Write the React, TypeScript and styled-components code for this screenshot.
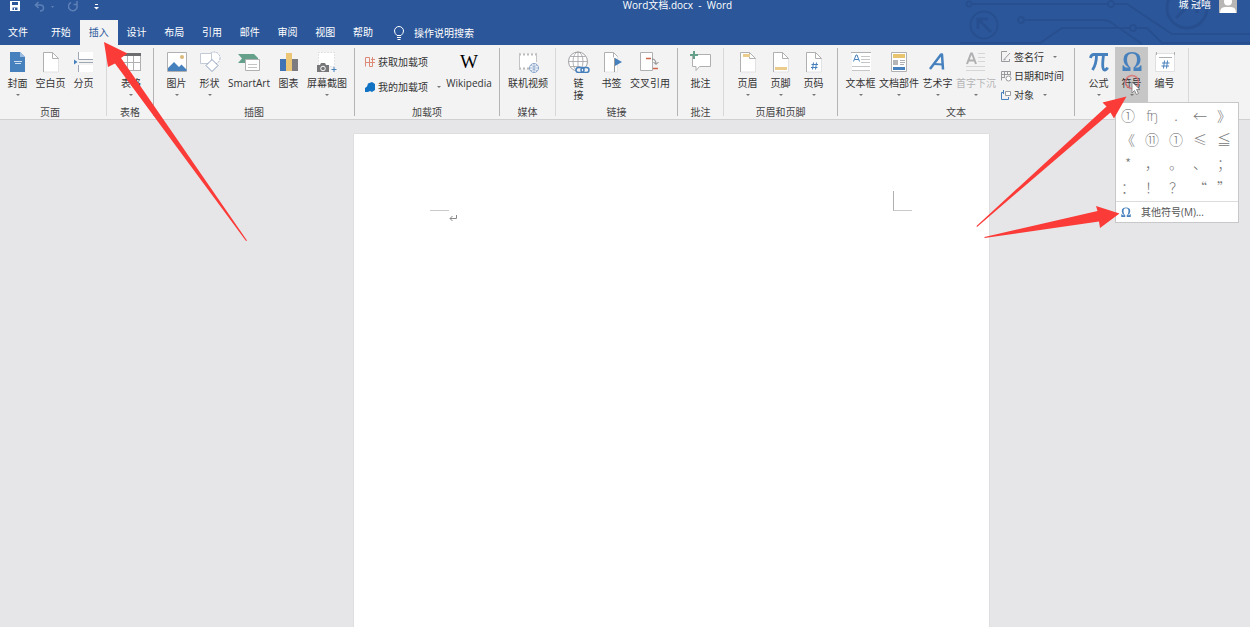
import React from "react";
import styled, { createGlobalStyle, css } from "styled-components";

const GlobalStyle = createGlobalStyle`
  *, *::before, *::after { box-sizing: border-box; }
  html, body { margin: 0; padding: 0; }
  body {
    font-family: "Open Sans", "Noto Sans CJK SC", sans-serif;
    font-size: 10px;
    line-height: 14px;
    color: #333;
    background: #e6e6e8;
    overflow: hidden;
  }
  button {
    font: inherit;
    color: inherit;
    border: 0;
    padding: 0;
    background: none;
    white-space: nowrap;
  }
`;

const BLUE = "#4680bd";
const LINE = "#b0b0b3";

const Shell = styled.div`
  position: relative;
  display: flex;
  flex-direction: column;
  min-height: 100vh;
  overflow: hidden;
`;

const Header = styled.header`
  position: relative;
  background: #2b579a;
  color: #fff;
`;

const Circuit = styled.svg`
  position: absolute;
  top: 0;
  right: 0;
`;

const TitleBar = styled.div`
  position: relative;
  display: grid;
  grid-template-columns: 1fr auto 1fr;
  height: 20px;
  padding: 0 13px 0 10px;
`;

const QuickAccess = styled.div`
  display: flex;
  align-items: center;
  gap: 14px;
  height: 12px;
`;

const QuickButton = styled.button<{ $faint?: boolean }>`
  display: flex;
  align-items: center;
  color: ${(p) => (p.$faint ? "#5d80b8" : "#fff")};
`;

const Title = styled.div`
  height: 12px;
  line-height: 11px;
  padding-left: 108px;
  white-space: pre;
`;

const User = styled.div`
  display: flex;
  justify-content: flex-end;
  gap: 8px;
  height: 12px;
  line-height: 8px;
`;

const TabRow = styled.nav`
  position: relative;
  display: flex;
  height: 25px;
`;

const Tabs = styled.div`
  display: grid;
  grid-template-columns: repeat(9, 1fr);
  width: 340px;
`;

const Tab = styled.button<{ $active?: boolean }>`
  height: 25px;
  padding-bottom: 1px;
  ${(p) =>
    p.$active &&
    css`
      background: #f3f3f4;
      color: #2b579a;
    `}
`;

const FileTab = styled(Tab)`
  width: 36px;
  margin-right: 6px;
`;

const TellMe = styled.button`
  display: flex;
  align-items: center;
  gap: 9px;
  margin-left: 11px;
`;

const Ribbon = styled.div`
  display: flex;
  height: 75px;
  background: #f3f3f4;
  border-bottom: 1px solid #d0d0d2;
`;

const Separator = styled.div<{ $strong?: boolean }>`
  width: 1px;
  flex: none;
  margin: 3px 0;
  background: ${(p) => (p.$strong ? "#b4b4b6" : "#d8d8da")};
`;

const GroupBox = styled.section<{ $width: number }>`
  display: flex;
  flex-direction: column;
  flex: none;
  width: ${(p) => p.$width}px;
`;

const GroupItems = styled.div<{ $pad: number }>`
  display: flex;
  height: 60px;
  padding: 2px 0 0 ${(p) => p.$pad}px;
`;

const GroupLabel = styled.div`
  text-align: center;
  color: #444;
`;

const Big = styled.button<{ $width: number; $active?: boolean; $disabled?: boolean }>`
  display: flex;
  flex-direction: column;
  align-items: center;
  width: ${(p) => p.$width}px;
  height: 56px;
  padding-top: 4px;
  background: ${(p) => (p.$active ? "#c6c6c7" : "none")};
  color: ${(p) => (p.$disabled ? "#b3b3b5" : "inherit")};
`;

const BigLabel = styled.span`
  margin-top: 4px;
  line-height: 12px;
  white-space: pre;
`;

const Caret = styled.i`
  width: 0;
  height: 0;
  border: 2px solid transparent;
  border-top-color: #777;
  border-bottom: 0;
`;

const BigCaret = styled(Caret)`
  margin-top: 5px;
`;

const SmallColumn = styled.div<{ $width: number; $row: number; $top: number }>`
  display: grid;
  grid-auto-rows: ${(p) => p.$row}px;
  align-content: start;
  width: ${(p) => p.$width}px;
  padding-top: ${(p) => p.$top}px;
`;

const TextTools = styled(SmallColumn)`
  padding-left: 2px;
`;

const Small = styled.button`
  display: flex;
  align-items: center;
  gap: 2px;
`;

const SmallCaret = styled(Caret)`
  margin-left: 7px;
`;

const WikiMark = styled.span`
  height: 22px;
  font: 19px/22px "Liberation Serif", serif;
  color: #000;
`;

const MenuAnchor = styled.div`
  position: relative;
`;

const Menu = styled.div`
  position: absolute;
  top: 55px;
  left: 0;
  z-index: 2;
  width: 124px;
  background: #fff;
  border: 1px solid #c8c8ca;
`;

const SymbolGrid = styled.div`
  display: grid;
  grid-template-columns: repeat(5, 24px);
  grid-auto-rows: 24px;
  padding-bottom: 2px;
`;

const SymbolButton = styled.button`
  font: 14px/22px "Noto Sans CJK SC", "DejaVu Sans", sans-serif;
  font-weight: 300;
  color: #777;
`;

const MoreSymbols = styled.button`
  display: flex;
  align-items: center;
  gap: 9px;
  width: 100%;
  height: 21px;
  padding-left: 4px;
  border-top: 1px solid #dcdcde;
  color: #555;
`;

const ClickMark = styled.svg`
  position: absolute;
  top: 26px;
  left: 8px;
  z-index: 1;
  pointer-events: none;
`;

const Workspace = styled.main`
  display: flex;
  flex: 1;
  justify-content: center;
  padding: 14px 0 0 93px;
`;

const Page = styled.article`
  width: 635px;
  padding: 57px 77px 0 76px;
  background: #fff;
  box-shadow: 0 0 1px #b5b5b8;
`;

const MarginMarks = styled.div`
  display: flex;
  justify-content: space-between;
  height: 20px;
`;

const Mark = styled.div<{ $side?: boolean }>`
  width: 19px;
  border-bottom: 1px solid #c9c9c9;
  border-left: ${(p) => (p.$side ? "1px solid #b0b0b0" : "0")};
`;

const Paragraph = styled.div`
  display: flex;
  padding: 3px 0 0 19px;
`;

const Pointers = styled.svg`
  position: absolute;
  top: 0;
  left: 0;
  z-index: 3;
  pointer-events: none;
`;

const Ico = ({ children }: { children: React.ReactNode }) => (
  <svg width="24" height="22" viewBox="0 0 24 22" fill="none" stroke={LINE} strokeWidth="1" aria-hidden="true">
    {children}
  </svg>
);

const Sheet = ({ x = 5 }: { x?: number }) => (
  <g>
    <path d={`M${x}.5 1.5h9l6 6v13.5h-15z`} fill="#fff" stroke="#e2e2e4" />
    <path d={`M${x}.5 21V1.5h9l6 6`} />
    <path d={`M${x + 9}.5 1.500v6h6`} />
  </g>
);

const OMEGA =
  "M2.500 20v-5.500h1.500q.5 2 2 2h3q-5.500-2.500-5.500-8Q3.500 1 12 1t8.500 7.500q0 5.500-5.500 8h3q1.500 0 2-2h1.500V20h-8v-3.500q3.500-3 3.500-8Q17 2.500 12 2.500T7 8.500q0 5 3.500 8V20z";

const icons: Record<string, React.ReactNode> = {
  cover: (
    <Ico>
      <path d="M4 1h10l5 5v15H4z" fill={BLUE} stroke="none" />
      <path d="M14 1v5h5z" fill="#9dbde0" stroke="none" />
      <path d="M8 10.500h8M9 12.500h6" stroke="#cfe0f2" />
    </Ico>
  ),
  blank: <Ico><Sheet x={4} /></Ico>,
  pageBreak: (
    <Ico>
      <path d="M6 1h15v8H6zM6 14h15v7H6z" fill="#fff" stroke="none" />
      <path d="M6.500 1v7.500H21M6.500 21v-7M7 11.500h14" stroke="#a0a7b4" />
      <path d="M2 8.500 5.500 11 2 13.500z" fill={BLUE} stroke="none" />
    </Ico>
  ),
  table: (
    <Ico>
      <path d="M2 2h20v18H2z" fill="#fff" stroke="none" />
      <path d="M2 2h20v3H2z" fill="#6d6d70" stroke="none" />
      <path d="M2 11.500h20M2 19.500h20M8.500 5v15M14.500 5v15M21.500 5v15" />
    </Ico>
  ),
  picture: (
    <Ico>
      <path d="M2.500 1.500h19v19h-19z" fill="#fff" />
      <circle cx="17" cy="6" r="2" fill="#dcb878" stroke="none" />
      <path d="M3 20v-3l6-6 5 5 2.500-2.500 5 5v1.500z" fill={BLUE} stroke="none" />
    </Ico>
  ),
  shapes: (
    <Ico>
      <circle cx="16" cy="7" r="6" fill="#fff" stroke="#a9b5c8" strokeDasharray="2 1" />
      <path d="M2.500 2.500h11v10h-11z" fill="#fff" stroke="#c3cad5" />
      <path d="m14 8.500 6 6-6 6-6-6z" fill="#fff" stroke="#8c9dba" />
    </Ico>
  ),
  smartArt: (
    <Ico>
      <path d="M1 3h16l4 4v5H1l4-4.500z" fill="#64a08a" stroke="none" />
      <path d="M8.500 8.500h14v11h-14z" fill="#fff" />
      <path d="M11 13.500h9M11 16.500h9" stroke="#c4c4c7" />
    </Ico>
  ),
  chart: (
    <Ico>
      <path d="M3 8h6v12H3z" fill="#3f73b5" stroke="none" />
      <path d="M9 2h6v18H9z" fill="#ebc676" stroke="none" />
      <path d="M15 8h6v12h-6z" fill="#7b7b80" stroke="none" />
    </Ico>
  ),
  screenshot: (
    <Ico>
      <path d="M3.500 1.500h16v14h-16z" fill="#fff" stroke="#ccc" strokeDasharray="1 2" />
      <path d="M2 14h3l1-2h4l1 2h3v7H2z" fill="#77777a" stroke="none" />
      <circle cx="8" cy="17.500" r="2.300" fill="#77777a" stroke="#fff" />
      <path d="M16.500 18.500h5M19 16v5" stroke={BLUE} />
    </Ico>
  ),
  video: (
    <Ico>
      <path d="M3 3h17v15H3z" fill="#fff" stroke="none" />
      <path d="M3.500 3.500h17M3.500 17.500h11" stroke="#777" strokeWidth="2" strokeDasharray="1 3" />
      <path d="M3.500 2v17M20.500 2v9" stroke="#c4c4c6" />
      <circle cx="18" cy="17" r="4.500" fill="#fff" stroke="#86a3ca" />
      <path d="M13.500 17h9M18 12.500v9M15 14.500q3 2 6 0M15 19.500q3-2 6 0" stroke="#86a3ca" strokeWidth=".8" />
    </Ico>
  ),
  link: (
    <Ico>
      <circle cx="11" cy="10.500" r="9.500" fill="#fff" stroke="#a0a0a4" />
      <ellipse cx="11" cy="10.500" rx="5" ry="9.500" stroke="#a0a0a4" strokeWidth=".8" />
      <path d="M1.500 10.500h19M11 1v19M3.500 5.500h15M3.500 15.500h10" stroke="#a0a0a4" strokeWidth=".8" />
      <rect x="9" y="16.500" width="8" height="5" rx="2.500" fill="#f3f3f4" stroke={BLUE} strokeWidth="1.500" />
      <rect x="14" y="16.500" width="8" height="5" rx="2.500" stroke={BLUE} strokeWidth="1.500" />
    </Ico>
  ),
  bookmark: (
    <Ico>
      <path d="M4.500 1.500h9l4 4v15.500h-13z" fill="#fff" stroke="#e6e6e8" />
      <path d="M4.500 21V1.500h9l4 4M13.500 1.500v5" />
      <path d="M14.500 7v14" stroke="#999" />
      <path d="m15 7 7 4-7 4z" fill={BLUE} stroke="none" />
    </Ico>
  ),
  crossRef: (
    <Ico>
      <path d="M2.500 1.500h12v18h-12z" fill="#fff" />
      <path d="M8 7.500h5M15 17.500h5" stroke="#d0664b" strokeWidth="1.500" />
      <path d="M14 8q4 0 4 5m-2.500-2 2.500 2.500 2.500-2.500" stroke="#808084" />
    </Ico>
  ),
  comment: (
    <Ico>
      <path d="M3.500 3.500h18v12h-11l-3.500 4v-4H3.500z" fill="#fff" />
      <path d="M5 0v8M1 4h8" stroke="#64a08a" strokeWidth="2" />
    </Ico>
  ),
  header: <Ico><Sheet x={4} /><path d="M7 3h7v3H7z" fill="#eccc8c" stroke="none" /></Ico>,
  footer: <Ico><Sheet x={4} /><path d="M6 16h12v3H6z" fill="#eccc8c" stroke="none" /></Ico>,
  pageNo: (
    <Ico>
      <Sheet x={4} />
      <path d="m11.500 11.500-1 7M14.500 11.500l-1 7M9.500 13.500h6.500M9 16.500h6.500" stroke={BLUE} />
    </Ico>
  ),
  textBox: (
    <Ico>
      <path d="M3 1h19v19H3z" fill="#fff" stroke="none" />
      <path d="M2 1.500h20" />
      <path d="M12 5.500h9M12 8.500h9M12 11.500h9M3 15.500h18M3 19.500h18" stroke="#c6c6c9" />
      <path d="M4.500 10.500 7 4h1l2.500 6.500M5.500 8.500h4" stroke={BLUE} />
    </Ico>
  ),
  parts: (
    <Ico>
      <path d="M4.500 1.500h15v19h-15z" fill="#fff" />
      <path d="M6 3h12v4H6z" fill="#e9c46e" stroke="none" />
      <path d="M6 9h5v5H6z" fill="#b5b5b8" stroke="none" />
      <path d="M13 9.500h5M13 11.500h5M13 13.500h4" />
      <path d="M6 16h12v3H6z" fill={BLUE} stroke="none" />
    </Ico>
  ),
  wordArt: (
    <Ico>
      <path d="M4 18 15 3.500h1l1 15" stroke={BLUE} strokeWidth="2.500" strokeLinejoin="round" />
      <path d="m8 13 9 .5" stroke={BLUE} strokeWidth="2" />
    </Ico>
  ),
  dropCap: (
    <Ico>
      <path d="m3 13 4-10.500h1L12 13M4.500 9.500h6" stroke="#b0b0b2" strokeWidth="2" />
      <path d="M14 2.500h7M14 6.500h7M14 10.500h7M2 15.500h19M2 19.500h19" stroke="#d6d6d9" />
    </Ico>
  ),
  formula: (
    <Ico>
      <path d="M3.500 7Q4 3.500 7 3.500h14M9.500 4q0 9-4 15M16.500 4q-2 15 1 15 2 0 3-2.500" stroke={BLUE} strokeWidth="2.800" />
    </Ico>
  ),
  omega: <Ico><path d={OMEGA} fill={BLUE} stroke="none" /></Ico>,
  number: (
    <Ico>
      <path d="M2.500 2.500h19v18h-19z" fill="#fff" stroke="#e0e0e2" />
      <path d="M3.500 1v3M21.500 1v3M6 6.500h13" />
      <path d="m11.500 9.500-1 8M14.500 9.500l-1 8M9 12h7.500M8.500 15h7.500" stroke={BLUE} />
    </Ico>
  ),
};

const Mini = ({ children }: { children: React.ReactNode }) => (
  <svg width="12" height="12" viewBox="0 0 12 12" fill="none" stroke="#999a9e" aria-hidden="true">
    {children}
  </svg>
);

type ItemProps = {
  icon?: string;
  label: string;
  width?: number;
  caret?: boolean;
  active?: boolean;
  disabled?: boolean;
};

const Item = ({ icon, label, width = 33, caret, active, disabled }: ItemProps) => (
  <Big $width={width} $active={active} $disabled={disabled} disabled={disabled}>
    {icon ? icons[icon] : <WikiMark>W</WikiMark>}
    <BigLabel>{label}</BigLabel>
    {caret && <BigCaret />}
  </Big>
);

type GroupProps = { width: number; pad?: number; label?: string; strong?: boolean; children: React.ReactNode };

const Group = ({ width, pad = 6, label, strong, children }: GroupProps) => (
  <>
    <GroupBox $width={width}>
      <GroupItems $pad={pad}>{children}</GroupItems>
      {label && <GroupLabel>{label}</GroupLabel>}
    </GroupBox>
    <Separator $strong={strong} />
  </>
);

const tabs = ["开始", "插入", "设计", "布局", "引用", "邮件", "审阅", "视图", "帮助"];
const symbols = [
  "①", "ʩ", ".", "←", "》",
  "《", "⑪", "①", "≤", "≦",
  "*", "，", "。", "、", "；",
  "：", "！", "？", "“", "”",
];

export default function App() {
  return (
    <Shell>
      <GlobalStyle />
      <Header>
        <Circuit width="290" height="45" viewBox="0 0 290 45" fill="none" stroke="#274f8f" strokeWidth="2" aria-hidden="true">
          <circle cx="9" cy="4" r="2.500" />
          <path d="M12 4h136M154 4h13l45 30h78" />
          <circle cx="151" cy="4" r="3" />
          <circle cx="24" cy="25" r="13.500" />
          <path d="m31 32-12-12M18 29V19h10" strokeWidth="3" />
          <circle cx="61" cy="20" r="3" />
          <path d="M64 20h78q6 0 10 3l30 21M0 43h80l22-15h68M176 28h11l15 15h88" />
          <circle cx="173" cy="28" r="3" />
          <circle cx="227" cy="8" r="20" strokeWidth="3" />
          <path d="m216 18 20-20M223-1h14v14" strokeWidth="3" />
        </Circuit>
        <TitleBar>
          <QuickAccess>
            <QuickButton aria-label="保存">
              <svg width="10" height="10" viewBox="0 0 10 10">
                <path d="M0 0h10v10H0z" fill="currentColor" />
                <path d="M2 1h6v3H2zM2.500 6.500h5V9h-5z" fill="#2b579a" />
                <path d="M4 7h1v2H4z" fill="currentColor" />
              </svg>
            </QuickButton>
            <QuickButton $faint aria-label="撤消">
              <svg width="20" height="11" viewBox="0 0 20 11" fill="none" stroke="currentColor" strokeWidth="1.500">
                <path d="M4.500 1 1.500 4l3 3M2 4h4q3.500 0 3.500 3T6 10" />
                <path d="M17 5h3l-1.500 2z" fill="currentColor" stroke="none" />
              </svg>
            </QuickButton>
            <QuickButton $faint aria-label="恢复">
              <svg width="16" height="11" viewBox="5 0 16 11" fill="none" stroke="currentColor" strokeWidth="1.500">
                <path d="M8 1.500a4.300 4.300 0 1 0 5 1M10.500 3.500H14V0" />
              </svg>
            </QuickButton>
            <QuickButton aria-label="自定义快速访问工具栏">
              <svg width="5" height="6" viewBox="4 0 5 6" overflow="visible">
                <path d="M1 1h3v1H1zM0 4h5L2.500 6.500z" fill="currentColor" />
              </svg>
            </QuickButton>
          </QuickAccess>
          <Title>{"Word文档.docx  -  Word"}</Title>
          <User>
            <span>城 冠嘻</span>
            <svg width="18" height="13" viewBox="0 0 18 13" aria-hidden="true">
              <path d="M0 0h18v13H0z" fill="#b9b6b6" />
              <circle cx="9" cy="1.500" r="4" fill="#fff" />
              <path d="M1 13q0-6 5-6h6q5 0 5 6z" fill="#fff" />
            </svg>
          </User>
        </TitleBar>
        <TabRow>
          <FileTab>文件</FileTab>
          <Tabs>
            {tabs.map((t) => (
              <Tab key={t} $active={t === "插入"}>{t}</Tab>
            ))}
          </Tabs>
          <TellMe>
            <svg width="12" height="14" viewBox="0 0 12 14" fill="none" stroke="#fff" aria-hidden="true">
              <path d="M4 9.500Q1.500 7.500 1.500 5a4.500 4.500 0 0 1 9 0q0 2.500-2.500 4.500zM4 11.500h4M4.500 13.500h3" />
            </svg>
            操作说明搜索
          </TellMe>
        </TabRow>
      </Header>

      <Ribbon>
        <GroupBox $width={100}>
          <GroupItems $pad={1}>
            <Item icon="cover" label="封面" caret />
            <Item icon="blank" label="空白页" />
            <Item icon="pageBreak" label="分页" />
          </GroupItems>
          <GroupLabel>页面</GroupLabel>
        </GroupBox>
        <GroupBox $width={6} />
        <Separator />
        <Group width={46} label="表格" strong>
          <Item icon="table" label="表格" width={36} caret />
        </Group>
        <Group width={200} label="插图" strong>
          <Item icon="picture" label="图片" caret />
          <Item icon="shapes" label="形状" caret />
          <Item icon="smartArt" label="SmartArt" width={46} />
          <Item icon="chart" label="图表" />
          <Item icon="screenshot" label="屏幕截图" width={44} caret />
        </Group>
        <Group width={144} pad={9} label="加载项" strong>
          <SmallColumn $width={80} $row={25} $top={2}>
            <Small>
              <Mini>
                <path d="M1.500 1.500h4v9M1.500 1.500v9M1 6.500h10M8.500 1v5.500M7 3.500h4M5.500 10.500h3v-4" stroke="#dc8a76" />
              </Mini>
              获取加载项
            </Small>
            <Small>
              <Mini>
                <path d="M4 2.500 8 1l3 2v6l-3 2-2-1-2 1H1V7l2-1.500z" fill="#1272c4" stroke="none" />
              </Mini>
              我的加载项
              <SmallCaret />
            </Small>
          </SmallColumn>
          <Item label="Wikipedia" width={50} />
        </Group>
        <Group width={55} label="媒体">
          <Item icon="video" label="联机视频" width={44} />
        </Group>
        <Group width={121} label="链接" strong>
          <Item icon="link" label={"链\n接"} />
          <Item icon="bookmark" label="书签" />
          <Item icon="crossRef" label="交叉引用" width={44} />
        </Group>
        <Group width={45} label="批注">
          <Item icon="comment" label="批注" />
        </Group>
        <Group width={113} pad={7} label="页眉和页脚" strong>
          <Item icon="header" label="页眉" caret />
          <Item icon="footer" label="页脚" caret />
          <Item icon="pageNo" label="页码" caret />
        </Group>
        <Group width={236} label="文本" strong>
          <Item icon="textBox" label="文本框" caret />
          <Item icon="parts" label="文档部件" width={44} caret />
          <Item icon="wordArt" label="艺术字" caret />
          <Item icon="dropCap" label="首字下沉" width={44} caret disabled />
          <TextTools $width={72} $row={19} $top={0}>
            <Small>
              <Mini>
                <path d="M7 .500H1.500v10h8V8M4 8.500l6-6.500M3.500 9l2-.500" />
              </Mini>
              签名行
              <SmallCaret />
            </Small>
            <Small>
              <Mini>
                <path d="M1.500 10.500v-9h9v4M1 4.500h9M4.500 2v6M7.500 2v3M1 7.500h4" />
                <circle cx="8.500" cy="8.500" r="2.500" fill="#fff" />
              </Mini>
              日期和时间
            </Small>
            <Small>
              <Mini>
                <path d="M4 3.500H1.500v7h7V8M3.500 1v4" stroke={BLUE} />
                <path d="M5.500 2.500h5v4h-5z" fill="#fff" />
              </Mini>
              对象
              <SmallCaret />
            </Small>
          </TextTools>
        </Group>
        <Group width={113} pad={7}>
          <Item icon="formula" label="公式" caret />
          <MenuAnchor>
            <Item icon="omega" label="符号" active caret />
            <ClickMark width="22" height="26" viewBox="0 0 22 26" aria-hidden="true">
              <circle cx="9" cy="9" r="6.500" fill="none" stroke="#e06a6a" strokeWidth="1.500" opacity=".8" />
              <path d="M9 9v11l2.500-2.500 2 4 2-1-2-4H17z" fill="#fff" stroke="#777" strokeWidth=".8" />
            </ClickMark>
            <Menu>
              <SymbolGrid>
                {symbols.map((s, i) => (
                  <SymbolButton key={i}>{s}</SymbolButton>
                ))}
              </SymbolGrid>
              <MoreSymbols>
                <svg width="12" height="11" viewBox="2 0 20 22" aria-hidden="true">
                  <path d={OMEGA} fill={BLUE} />
                </svg>
                其他符号(M)...
              </MoreSymbols>
            </Menu>
          </MenuAnchor>
          <Item icon="number" label="编号" />
        </Group>
      </Ribbon>

      <Workspace>
        <Page>
          <MarginMarks>
            <Mark />
            <Mark $side />
          </MarginMarks>
          <Paragraph>
            <svg width="9" height="8" viewBox="0 0 9 8" fill="none" stroke="#888" aria-hidden="true">
              <path d="M7.500 1v3.500H1M3.500 2 1 4.500 3.500 7" />
            </svg>
          </Paragraph>
        </Page>
      </Workspace>

      <Pointers width="1250" height="250" viewBox="0 0 1250 250" fill="#fb3b38" aria-hidden="true">
        <path d="M104 42 127.500 53.500 121 58 247 240.500 246 241 115 63.500 108 67z" />
        <path d="M1126.500 96.500 1114 118.500 1110.500 112.500 977 227 976.500 226 1106.500 106.500 1102.500 102.500z" />
        <path d="M1119.500 213.500 1100 228 1099 221.500 984.500 238 984.500 237 1097.500 211 1096 206z" />
      </Pointers>
    </Shell>
  );
}
